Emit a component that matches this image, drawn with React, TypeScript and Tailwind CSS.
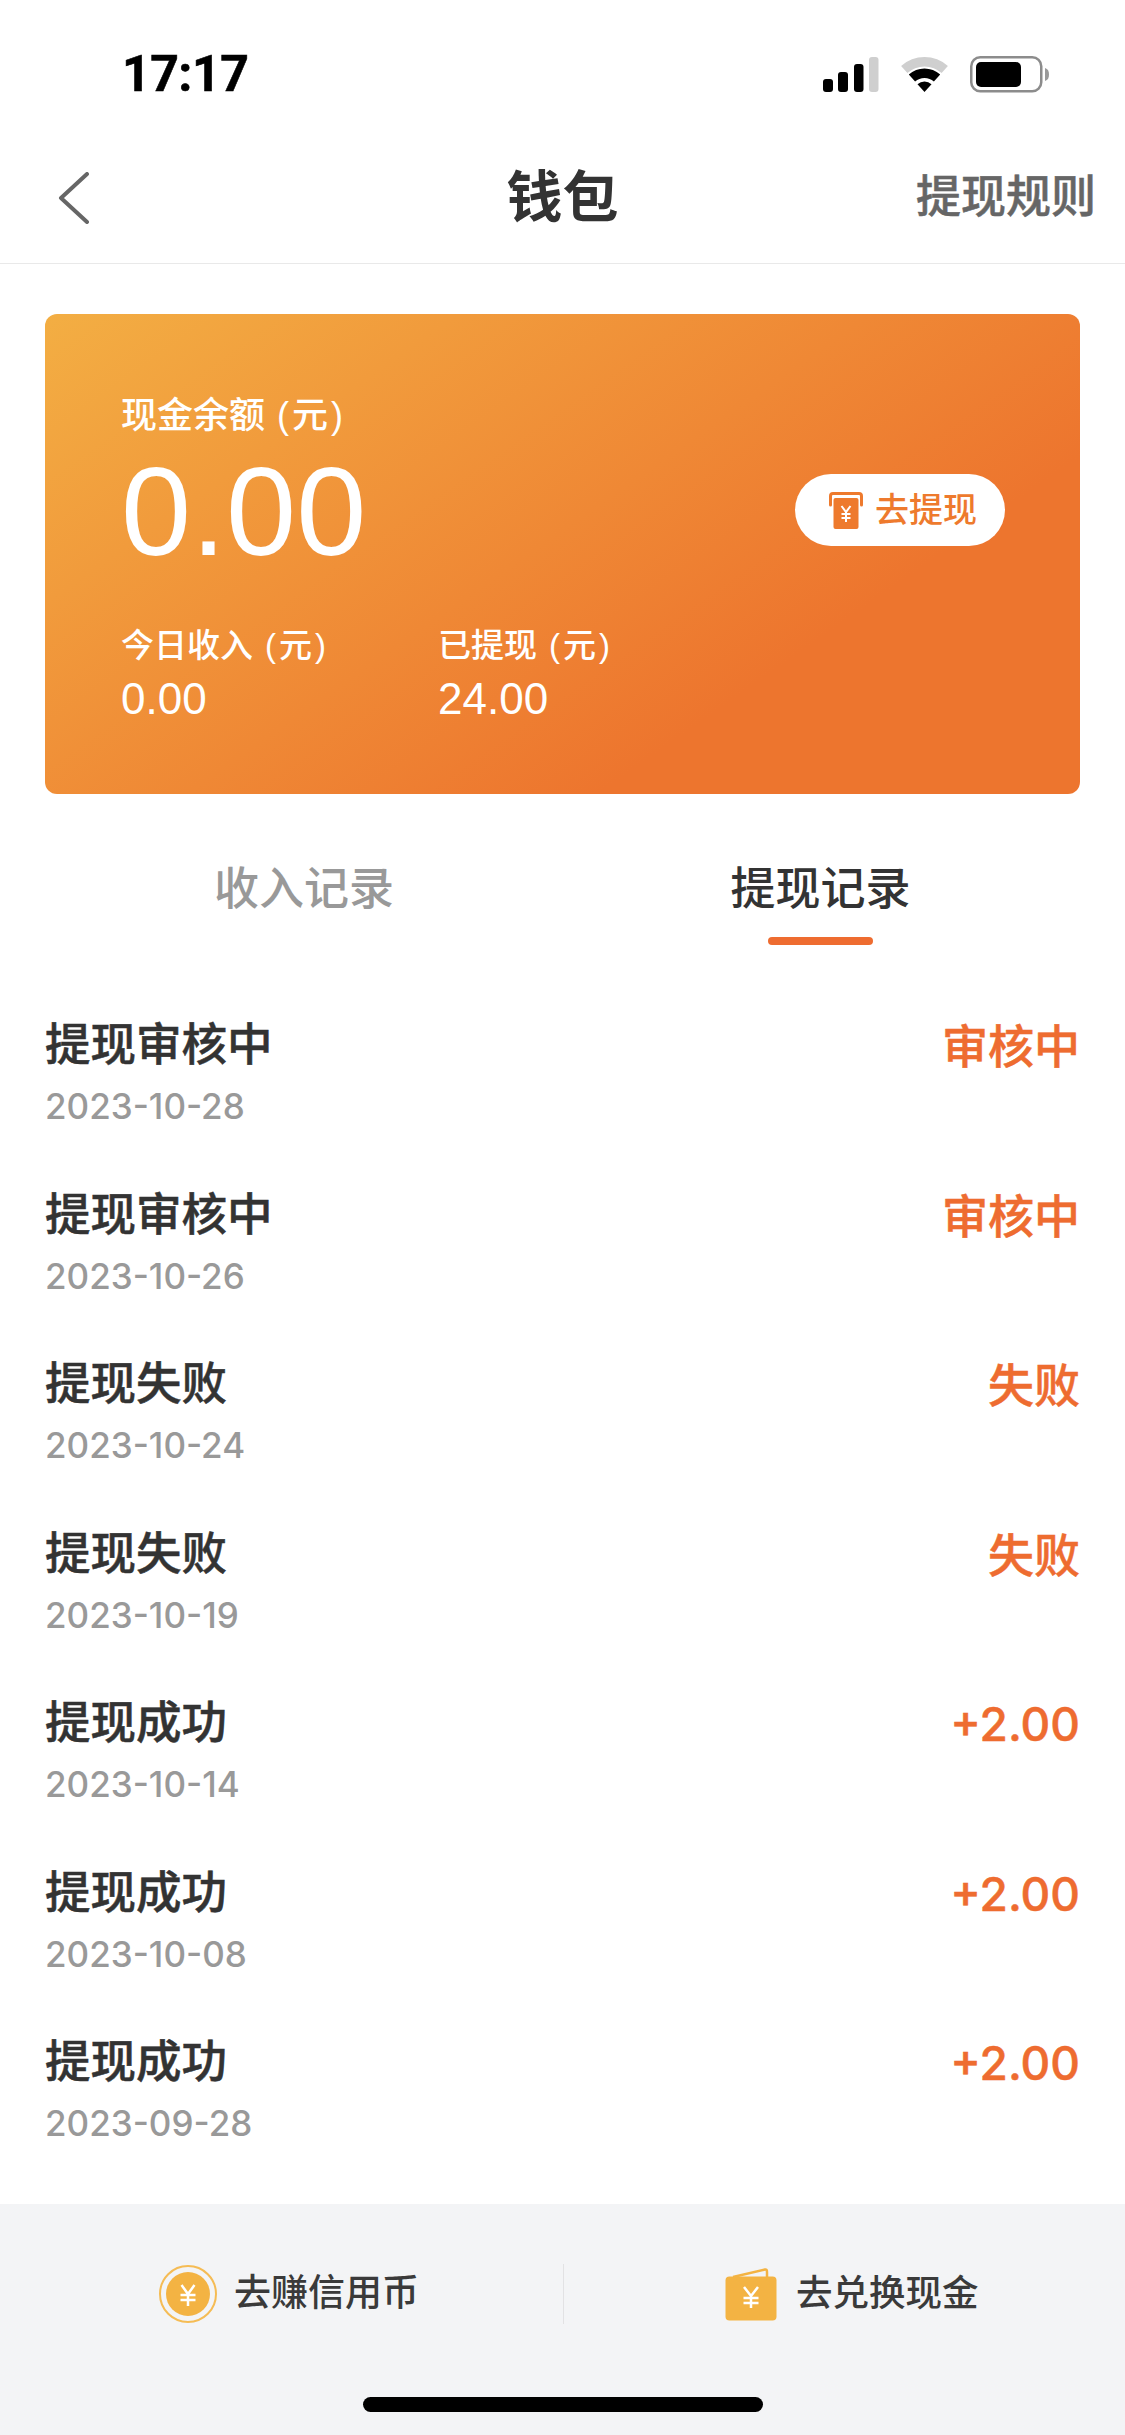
const SANS = "font-['Liberation_Sans','Noto_Sans_CJK_SC',sans-serif]";

const records = [
  { title: "提现审核中", date: "2023-10-28", status: "审核中" },
  { title: "提现审核中", date: "2023-10-26", status: "审核中" },
  { title: "提现失败", date: "2023-10-24", status: "失败" },
  { title: "提现失败", date: "2023-10-19", status: "失败" },
  { title: "提现成功", date: "2023-10-14", status: "+2.00" },
  { title: "提现成功", date: "2023-10-08", status: "+2.00" },
  { title: "提现成功", date: "2023-09-28", status: "+2.00" },
];

function StatusIcons() {
  return (
    <svg width="226" height="40" viewBox="0 0 226 40" className="block">
      <rect x="0" y="24" width="10" height="13" rx="3" fill="#000" />
      <rect x="15" y="17" width="10" height="20" rx="3" fill="#000" />
      <rect x="31" y="9" width="9.5" height="28" rx="3" fill="#000" />
      <rect x="46" y="2" width="9.5" height="35" rx="3" fill="#cfcfcf" />
      <path d="M78.1 11A35 35 0 0 1 124.900 11L118.600 18.050A25.500 25.500 0 0 0 84.400 18.050Z" fill="#cfcfcf" />
      <path d="M85.800 19.540A23.500 23.500 0 0 1 117.200 19.540L110.900 26.600A14 14 0 0 0 92.100 26.600Z" fill="#000" />
      <path d="M94.500 29.200A10.500 10.500 0 0 1 108.500 29.200L101.500 37Z" fill="#000" />
      <rect x="148.250" y="2.250" width="70" height="34" rx="9" fill="none" stroke="#8c8c8c" strokeWidth="2.500" />
      <rect x="153" y="7" width="45" height="25" rx="5" fill="#000" />
      <path d="M222 13c3 1 4 3 4 6.500s-1 5.500-4 6.500z" fill="#9a9a9a" />
    </svg>
  );
}

function WithdrawIcon() {
  return (
    <svg width="34" height="37" viewBox="0 0 34 37" className="block">
      <path d="M1.500 13V4Q1.500 1.500 4 1.500H30Q32.500 1.500 32.500 4V13" fill="none" stroke="#ee7a2d" strokeWidth="3" strokeLinecap="round" />
      <rect x="4.500" y="6" width="25" height="31" rx="2" fill="#ee7a2d" />
      <path d="M12.500 14l4.500 6 4.500-6M17 20v10M12.500 22h9M12.500 26h9" stroke="#fff" strokeWidth="2" fill="none" />
    </svg>
  );
}

function CoinIcon() {
  return (
    <svg width="58" height="58" viewBox="0 0 58 58" className="block">
      <circle cx="29" cy="29" r="28" fill="none" stroke="#f5bc55" strokeWidth="2" />
      <circle cx="29" cy="29" r="22" fill="#f3b343" />
      <path d="M22.500 20l6.500 9 6.500-9M29 29v12M21.500 30h15M21.500 35h15" stroke="#fff" strokeWidth="2.500" fill="none" />
    </svg>
  );
}

function WalletIcon() {
  return (
    <svg width="52" height="54" viewBox="0 0 52 54" className="block">
      <path d="M8 10 L40 2.500 Q42 2 42 5 V10" fill="none" stroke="#f3b343" strokeWidth="2.500" />
      <rect x="0.500" y="9.500" width="51" height="44" rx="4" fill="#f3b343" />
      <path d="M19 20l7 9 7-9M26 29v12M18.500 31h15M18.500 36h15" stroke="#fff" strokeWidth="2.500" fill="none" />
    </svg>
  );
}

function Unit() {
  return <span className="ml-[12px] tracking-[3px]">(元)</span>;
}

export default function App() {
  return (
    <div className={`flex h-[2435px] w-[1125px] flex-col bg-white ${SANS}`}>
      {/* status bar */}
      <div className="flex h-[132px] items-start justify-between pl-[122px] pr-[76px] pt-[44px]">
        <span className="font-['Roboto'] text-[50px] leading-[60px] font-bold tracking-[-0.5px] text-black [-webkit-text-stroke:0.6px_#000]">17:17</span>
        <div className="pt-[11px]">
          <StatusIcons />
        </div>
      </div>

      {/* nav */}
      <div className="relative flex h-[132px] shrink-0 items-center justify-between border-b border-[#e9e9e9] pl-[58px] pr-[29px]">
        <svg width="32" height="52" viewBox="0 0 32 52" className="block">
          <path d="M29 2 L3 26 L29 50" fill="none" stroke="#666" strokeWidth="4" strokeLinecap="round" strokeLinejoin="round" />
        </svg>
        <span className="absolute left-0 right-0 text-center text-[56px] font-bold text-[#333]">钱包</span>
        <span className="text-[45px] font-medium text-[#666] [-webkit-text-stroke:0.5px_#666]">提现规则</span>
      </div>

      {/* balance card */}
      <div className="mx-[45px] mt-[50px] flex h-[480px] shrink-0 items-start justify-between rounded-[12px] bg-[linear-gradient(145deg,#f3ae43_0%,#ed752e_72%)] pl-[76px] pr-[75px] text-white">
        <div className="pt-[77px]">
          <div className="text-[36px] leading-[50px] font-medium">现金余额<Unit /></div>
          <div className="mt-[8px] text-[126px] leading-[126px]">0.00</div>
          <div className="mt-[48px] flex">
            <div className="w-[317px]">
              <div className="text-[33px] leading-[46px] font-medium">今日收入<Unit /></div>
              <div className="mt-[5px] text-[44px] leading-[50px]">0.00</div>
            </div>
            <div>
              <div className="text-[33px] leading-[46px] font-medium">已提现<Unit /></div>
              <div className="mt-[5px] text-[44px] leading-[50px]">24.00</div>
            </div>
          </div>
        </div>
        <div className="mt-[160px] flex h-[72px] w-[210px] items-center justify-center gap-[12px] rounded-full bg-white pl-[6px]">
          <WithdrawIcon />
          <span className="text-[34px] font-medium text-[#ee7a2d]">去提现</span>
        </div>
      </div>

      {/* tabs */}
      <div className="flex h-[151px] shrink-0">
        <div className="flex w-[608px] justify-center pt-[66px]">
          <span className="text-[45px] leading-[60px] font-medium text-[#999]">收入记录</span>
        </div>
        <div className="flex flex-1 flex-col items-center pt-[66px] pr-[92px]">
          <span className="text-[45px] leading-[60px] font-medium text-[#333]">提现记录</span>
          <div className="mt-[17px] h-[8px] w-[105px] rounded-full bg-[#ee6c30]" />
        </div>
      </div>

      {/* records */}
      <div className="flex min-h-0 flex-1 flex-col px-[45px] pt-[71px]">
        {records.map((r) => (
          <div key={r.date} className="flex h-[169.5px] shrink-0 justify-between">
            <div>
              <div className="text-[45.5px] leading-[60px] font-medium text-[#333] [-webkit-text-stroke:0.5px_#333]">{r.title}</div>
              <div className="mt-[10px] font-['Inter'] text-[35px] leading-[40px] font-medium text-[#999]">{r.date}</div>
            </div>
            <div className="font-['Inter','Noto_Sans_CJK_SC',sans-serif] text-[46px] leading-[60px] font-medium text-[#ee6c30] [-webkit-text-stroke:0.5px_#ee6c30]">{r.status}</div>
          </div>
        ))}
      </div>

      {/* footer */}
      <div className="flex h-[231px] shrink-0 flex-col bg-[#f3f4f6]">
        <div className="flex pt-[60px]">
          <div className="flex h-[60px] w-[563px] items-center gap-[17px] pl-[159px]">
            <CoinIcon />
            <span className="text-[37px] font-medium text-[#3a3a3a]">去赚信用币</span>
          </div>
          <div className="h-[60px] w-[1px] bg-[#e2e2e4]" />
          <div className="flex h-[60px] flex-1 items-center gap-[19px] pl-[161px]">
            <WalletIcon />
            <span className="text-[36.5px] font-medium text-[#3a3a3a]">去兑换现金</span>
          </div>
        </div>
        <div className="mx-auto mt-[73px] h-[15px] w-[400px] rounded-full bg-black" />
      </div>
    </div>
  );
}
